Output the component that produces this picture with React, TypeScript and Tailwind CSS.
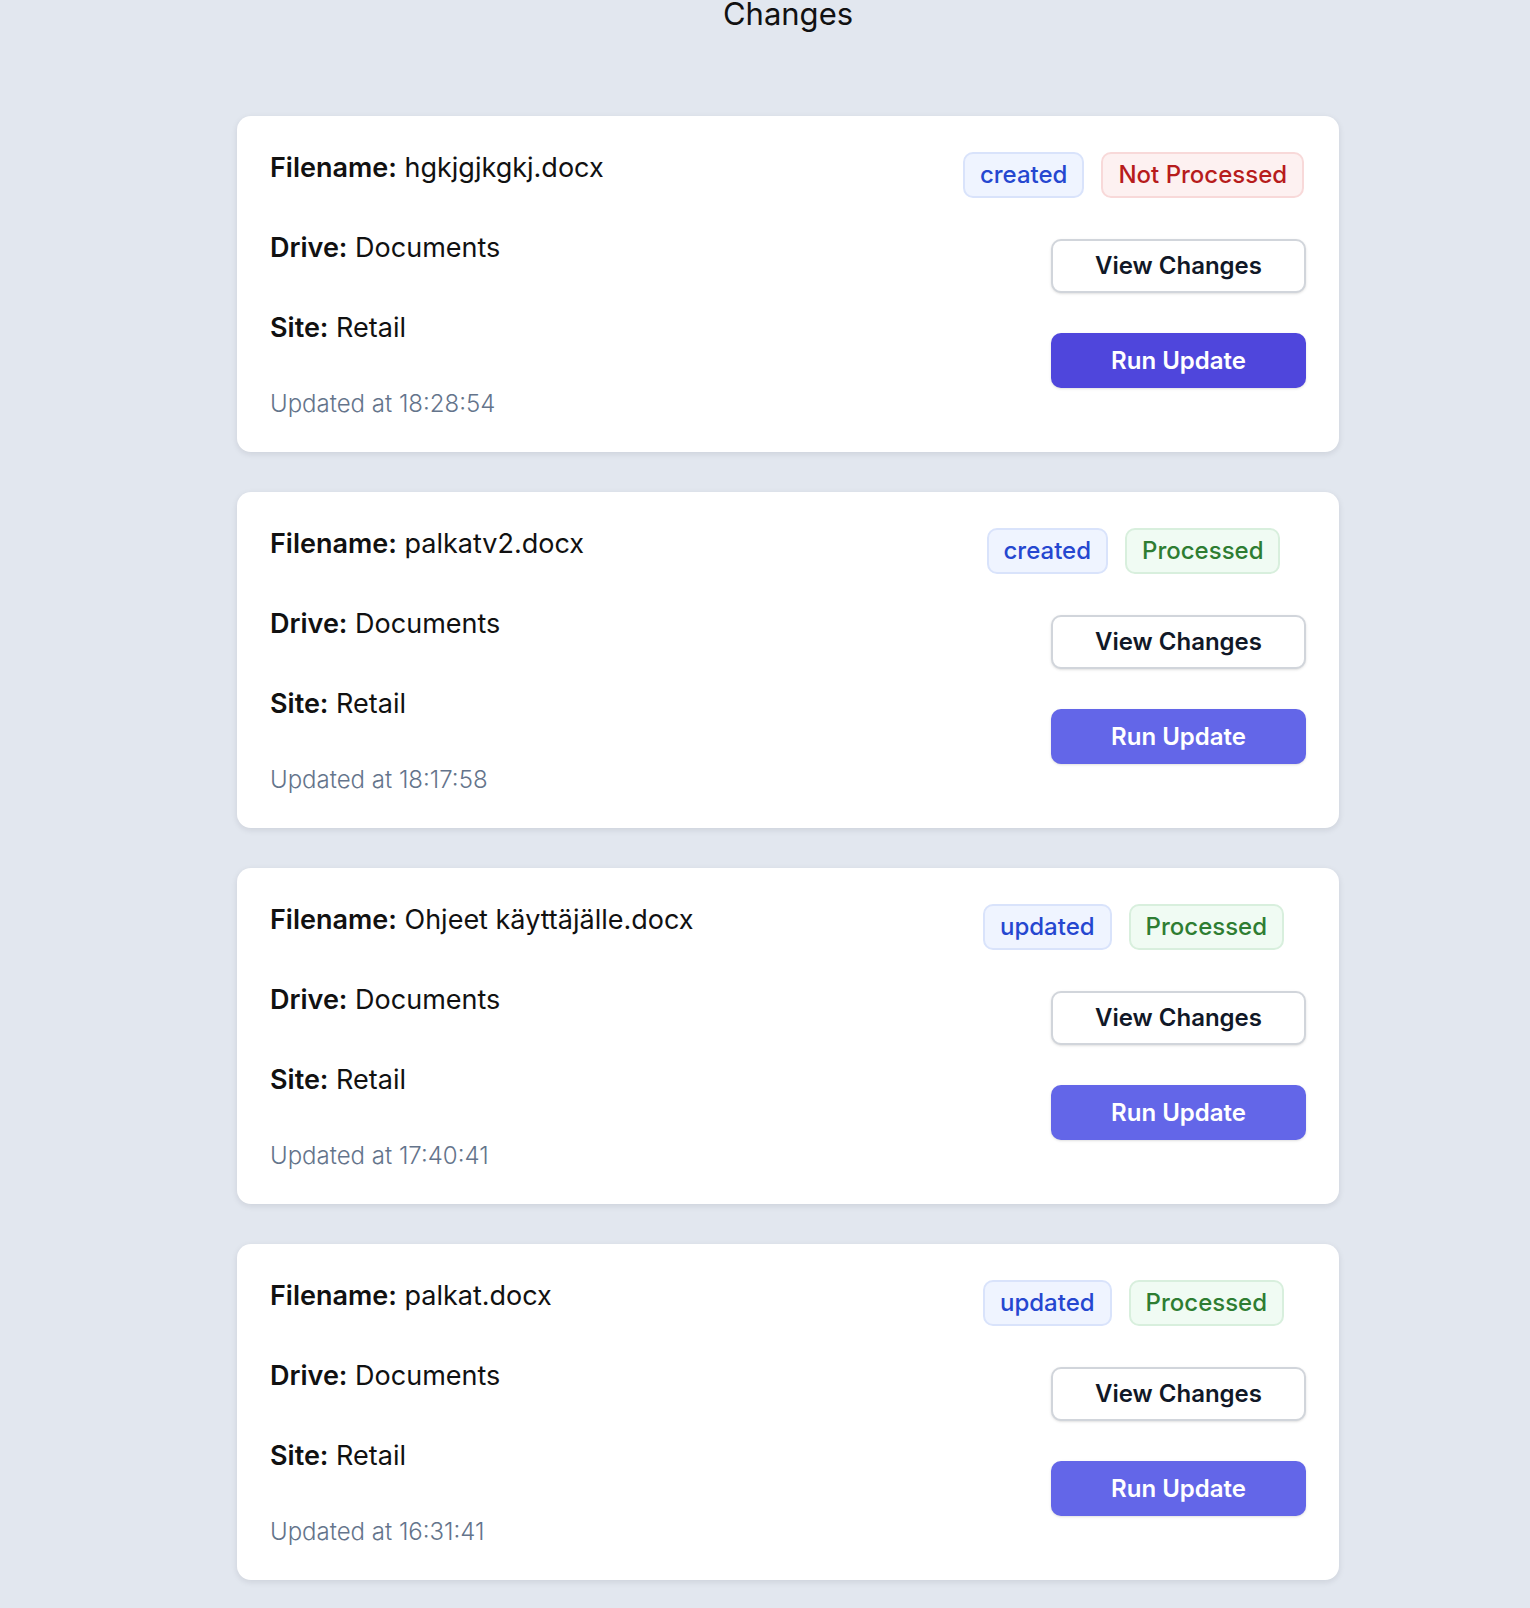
import React from "react";

type Item = {
  filename: string;
  type: "created" | "updated";
  processed: boolean;
  time: string;
  primary?: boolean;
};

const items: Item[] = [
  { filename: "hgkjgjkgkj.docx", type: "created", processed: false, time: "18:28:54", primary: true },
  { filename: "palkatv2.docx", type: "created", processed: true, time: "18:17:58" },
  { filename: "Ohjeet käyttäjälle.docx", type: "updated", processed: true, time: "17:40:41" },
  { filename: "palkat.docx", type: "updated", processed: true, time: "16:31:41" },
];

function Card({ item }: { item: Item }) {
  return (
    <div className="flex justify-between rounded-[14px] bg-white pl-[33px] pr-[33px] pt-[32px] pb-[28px] shadow-[0_2px_6px_rgba(15,23,42,0.10)]">
      <div className="flex flex-col text-[27px] leading-[40px] text-[#111111]">
        <div>
          <span className="font-semibold">Filename:</span> {item.filename}
        </div>
        <div className="mt-[40px]">
          <span className="font-semibold">Drive:</span> Documents
        </div>
        <div className="mt-[40px]">
          <span className="font-semibold">Site:</span> Retail
        </div>
        <div className="mt-[36px] text-[24px] font-light text-[#64748b]">Updated at {item.time}</div>
      </div>
      <div className="flex w-[345px] flex-col pt-[4px]">
        <div className="flex h-[46px] justify-center gap-[17px]">
          <span className="flex h-[46px] items-center rounded-[10px] border-2 border-[#d9e3fb] bg-[#eff4ff] px-[15px] text-[24px] font-medium text-[#2547d0]">
            {item.type}
          </span>
          {item.processed ? (
            <span className="flex h-[46px] items-center rounded-[10px] border-2 border-[#d8efdd] bg-[#f0fbf3] px-[15px] text-[24px] font-medium text-[#2e7d32]">
              Processed
            </span>
          ) : (
            <span className="flex h-[46px] items-center rounded-[10px] border-2 border-[#f8d9d9] bg-[#fdf1f1] px-[15px] text-[24px] font-medium text-[#b71c1c]">
              Not Processed
            </span>
          )}
        </div>
        <button className="mt-[41px] flex h-[54px] w-[255px] items-center justify-center self-end rounded-[10px] border-2 border-[#d1d5db] bg-white text-[24px] font-semibold text-[#111827] shadow-sm">
          View Changes
        </button>
        <button
          className={
            item.primary
              ? "mt-[40px] flex h-[55px] w-[255px] items-center justify-center self-end rounded-[10px] bg-[#4f46dc] text-[24px] font-semibold text-white shadow-sm"
              : "mt-[40px] flex h-[55px] w-[255px] items-center justify-center self-end rounded-[10px] bg-[#6366e8] text-[24px] font-semibold text-white shadow-sm"
          }
        >
          Run Update
        </button>
      </div>
    </div>
  );
}

export default function App() {
  return (
    <div
      className="min-h-screen overflow-hidden bg-[#e2e7ef] pl-[237px] pr-[191px]"
      style={{ fontFamily: "Inter, 'Noto Sans', sans-serif" }}
    >
      <h1 className="-mt-[4px] h-[36px] text-center text-[31px] font-normal leading-[36px] text-[#111111]">Changes</h1>
      <div className="mt-[84px] flex flex-col gap-[40px] pb-[40px]">
        {items.map((it) => (
          <Card key={it.filename} item={it} />
        ))}
      </div>
    </div>
  );
}
